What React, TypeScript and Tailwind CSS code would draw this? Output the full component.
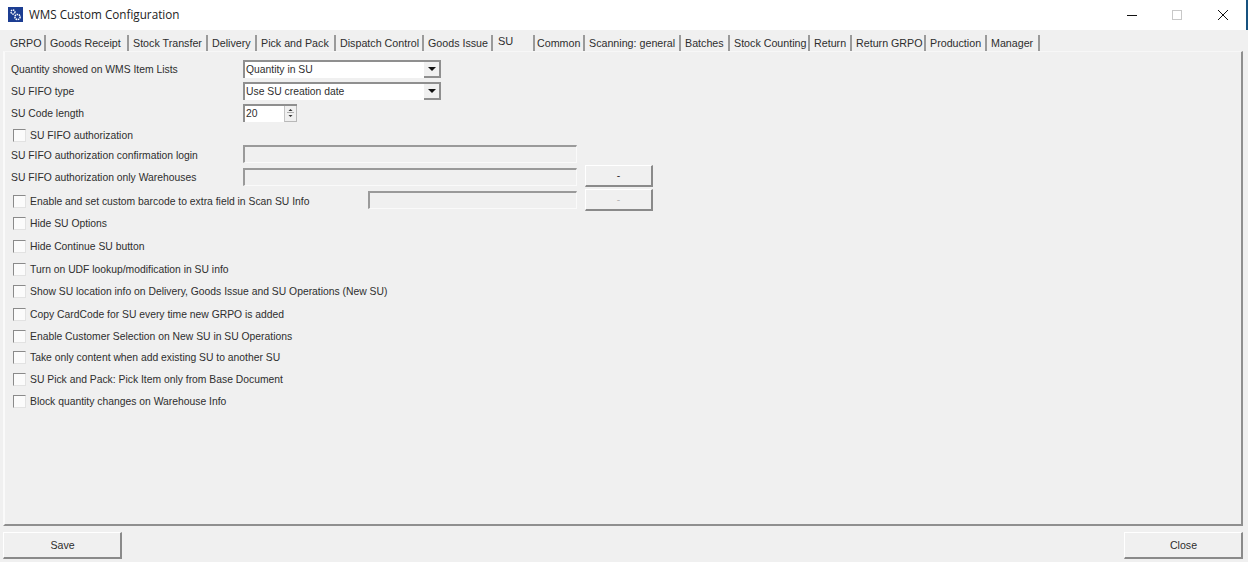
const tabs = [
  { label: 'GRPO', w: 'w-[40px]' },
  { label: 'Goods Receipt', w: 'w-[83px]' },
  { label: 'Stock Transfer', w: 'w-[79px]' },
  { label: 'Delivery', w: 'w-[49px]' },
  { label: 'Pick and Pack', w: 'w-[79px]' },
  { label: 'Dispatch Control', w: 'w-[88px]' },
  { label: 'Goods Issue', w: 'w-[69px]' },
  { label: 'SU', w: 'w-[40px]', active: true },
  { label: 'Common', w: 'w-[52px]' },
  { label: 'Scanning: general', w: 'w-[96px]' },
  { label: 'Batches', w: 'w-[49px]' },
  { label: 'Stock Counting', w: 'w-[80px]' },
  { label: 'Return', w: 'w-[42px]' },
  { label: 'Return GRPO', w: 'w-[74px]' },
  { label: 'Production', w: 'w-[61px]' },
  { label: 'Manager', w: 'w-[53px]' },
];

const checks = [
  { label: 'Hide SU Options', h: 'h-[22px]' },
  { label: 'Hide Continue SU button', h: 'h-[23px]' },
  { label: 'Turn on UDF lookup/modification in SU info', h: 'h-[23px]' },
  { label: 'Show SU location info on Delivery, Goods Issue and SU Operations (New SU)', h: 'h-[22px]' },
  { label: 'Copy CardCode for SU every time new GRPO is added', h: 'h-[24px]' },
  { label: 'Enable Customer Selection on New SU in SU Operations', h: 'h-[20px]' },
  { label: 'Take only content when add existing SU to another SU', h: 'h-[22px]' },
  { label: 'SU Pick and Pack: Pick Item only from Base Document', h: 'h-[22px]' },
  { label: 'Block quantity changes on Warehouse Info', h: 'h-[21px]' },
];

function Check({ label }: { label: string }) {
  return (
    <div className="flex items-center">
      <span className="w-[13px] h-[13px] shrink-0 bg-[#fbfbfb] border border-[#e2e2e2] border-t-[#8a8a8a] border-l-[#8a8a8a]" />
      <span className="ml-1">{label}</span>
    </div>
  );
}

function Combo({ value }: { value: string }) {
  return (
    <div className="w-[198px] h-[18px] mb-[2px] flex items-center justify-between bg-white border-t-2 border-l-2 border-[#8f8f8f] pl-[1px]">
      <span>{value}</span>
      <span className="w-[17px] h-[16px] flex items-center justify-center bg-[#f0f0f0] border-r-2 border-b-2 border-[#8f8f8f]">
        <svg width="8" height="4" viewBox="0 0 8 4"><path d="M0 0h8L4 4z" fill="#111" /></svg>
      </span>
    </div>
  );
}

function Disabled({ className }: { className: string }) {
  return <div className={`${className} h-[18px] border-t-2 border-l-2 border-[#9a9a9a] border-b border-r border-b-[#fafafa] border-r-[#fafafa]`} />;
}

function DashButton({ className, faint }: { className: string; faint?: boolean }) {
  return (
    <div className={`${className} ml-2 w-[68px] h-[22px] flex items-center justify-center border-t border-l border-white border-r-2 border-b-2 border-r-[#8a8a8a] border-b-[#8a8a8a] ${faint ? 'text-[#b5b5b5]' : ''}`}>
      -
    </div>
  );
}

function FootButton({ label }: { label: string }) {
  return (
    <div className="w-[119px] h-[27px] pl-[1px] pt-[2px] flex items-center justify-center text-[10.6px] border-t border-l border-white border-r-2 border-b-2 border-r-[#8a8a8a] border-b-[#8a8a8a]">
      {label}
    </div>
  );
}

export default function App() {
  return (
    <div className="w-[1248px] h-[562px] overflow-hidden flex flex-col bg-[#f0f0f0] text-[#2e2e2e] text-[10.35px] font-['Liberation_Sans',sans-serif]">
      {/* Title bar */}
      <div className="h-[30px] shrink-0 bg-white flex items-center pl-2 border-r-2 border-[#17527f]">
        <svg width="15" height="15" viewBox="0 0 15 15" className="mb-[1px]">
          <rect width="15" height="15" fill="#1c3d92" />
          <circle cx="5" cy="5" r="2" fill="none" stroke="#fff" strokeWidth="1.300" strokeDasharray="1.400 0.700" />
          <circle cx="9.500" cy="10" r="2.600" fill="none" stroke="#fff" strokeWidth="1.500" strokeDasharray="1.500 0.700" />
        </svg>
        <span className="ml-[6px] text-[11.7px] text-[#222] font-['Open_Sans',sans-serif]">WMS Custom Configuration</span>
        <div className="ml-auto flex items-center mr-[18px]">
          <svg width="10" height="10" viewBox="0 0 10 10"><path d="M0 5.500h10" stroke="#111" strokeWidth="1" /></svg>
          <svg width="10" height="10" viewBox="0 0 10 10" className="ml-[35px]"><rect x="0.500" y="0.500" width="9" height="9" fill="none" stroke="#c8c8c8" /></svg>
          <svg width="10" height="10" viewBox="0 0 10 10" className="ml-[36px]"><path d="M0 0l10 10M10 0L0 10" stroke="#111" strokeWidth="1" /></svg>
        </div>
      </div>

      {/* Tabs */}
      <div className="h-[21px] shrink-0 pl-[6px] flex items-end text-[10.7px]">
        {tabs.map((tab) =>
          tab.active ? (
            <div key={tab.label} className={`${tab.w} h-[18px] pl-[5px] pb-[1px] flex items-center text-[11px]`}>
              {tab.label}
            </div>
          ) : (
            <div key={tab.label} className={`${tab.w} h-[16px] pt-[1px] flex items-center whitespace-nowrap border-r-2 border-[#9a9a9a] ${tab.label === 'Common' ? 'border-l-2 border-l-[#9a9a9a] pl-[2px]' : 'pl-[4px]'}`}>
              {tab.label}
            </div>
          )
        )}
      </div>

      {/* Panel */}
      <div className="h-[475px] w-[1240px] shrink-0 ml-[3px] pt-[6px] pl-[6px] border-l-2 border-r-2 border-b-2 border-l-[#fafafa] border-r-[#8f8f8f] border-b-[#8f8f8f] border-t border-t-[#f7f7f7]">
        <div className="h-[23px] flex items-center">
          <span className="w-[232px]">Quantity showed on WMS Item Lists</span>
          <Combo value="Quantity in SU" />
        </div>
        <div className="h-[22px] flex items-center">
          <span className="w-[232px]">SU FIFO type</span>
          <Combo value="Use SU creation date" />
        </div>
        <div className="h-[22px] flex items-center">
          <span className="w-[232px]">SU Code length</span>
          <div className="w-[54px] h-[18px] mb-[2px] flex bg-white border-t-2 border-l-2 border-[#8f8f8f] pl-[1px] items-center justify-between">
            <span>20</span>
            <span className="w-[13px] h-[16px] flex flex-col bg-[#f0f0f0] border-l border-[#c4c4c4] border-r border-r-[#b8b8b8] border-b border-b-[#b8b8b8]">
              <svg width="11" height="7" viewBox="0 0 11 7"><path d="M3.500 5h4L5.500 3z" fill="#333" /><path d="M2 6.500h7" stroke="#b0b0b0" /></svg>
              <svg width="11" height="7" viewBox="0 0 11 7"><path d="M3.500 2h4L5.500 4z" fill="#333" /></svg>
            </span>
          </div>
        </div>
        <div className="h-[21px] flex items-center pl-[2px]"><Check label="SU FIFO authorization" /></div>
        <div className="h-[20px] flex items-center">
          <span className="w-[232px]">SU FIFO authorization confirmation login</span>
          <Disabled className="w-[334px] mb-[4px]" />
        </div>
        <div className="h-[24px] flex items-center">
          <span className="w-[232px]">SU FIFO authorization only Warehouses</span>
          <Disabled className="w-[334px] mb-[2px]" />
          <DashButton className="mb-[4px]" />
        </div>
        <div className="h-[23px] flex items-center pl-[2px]">
          <div className="w-[355px]"><Check label="Enable and set custom barcode to extra field in Scan SU Info" /></div>
          <Disabled className="w-[209px] mb-[3px]" />
          <DashButton className="mb-[3px]" faint />
        </div>
        {checks.map((row) => (
          <div key={row.label} className={`${row.h} flex items-center pl-[2px]`}><Check label={row.label} /></div>
        ))}
      </div>

      {/* Footer buttons */}
      <div className="mt-[6px] ml-[3px] mr-[5px] flex justify-between">
        <FootButton label="Save" />
        <FootButton label="Close" />
      </div>
    </div>
  );
}
